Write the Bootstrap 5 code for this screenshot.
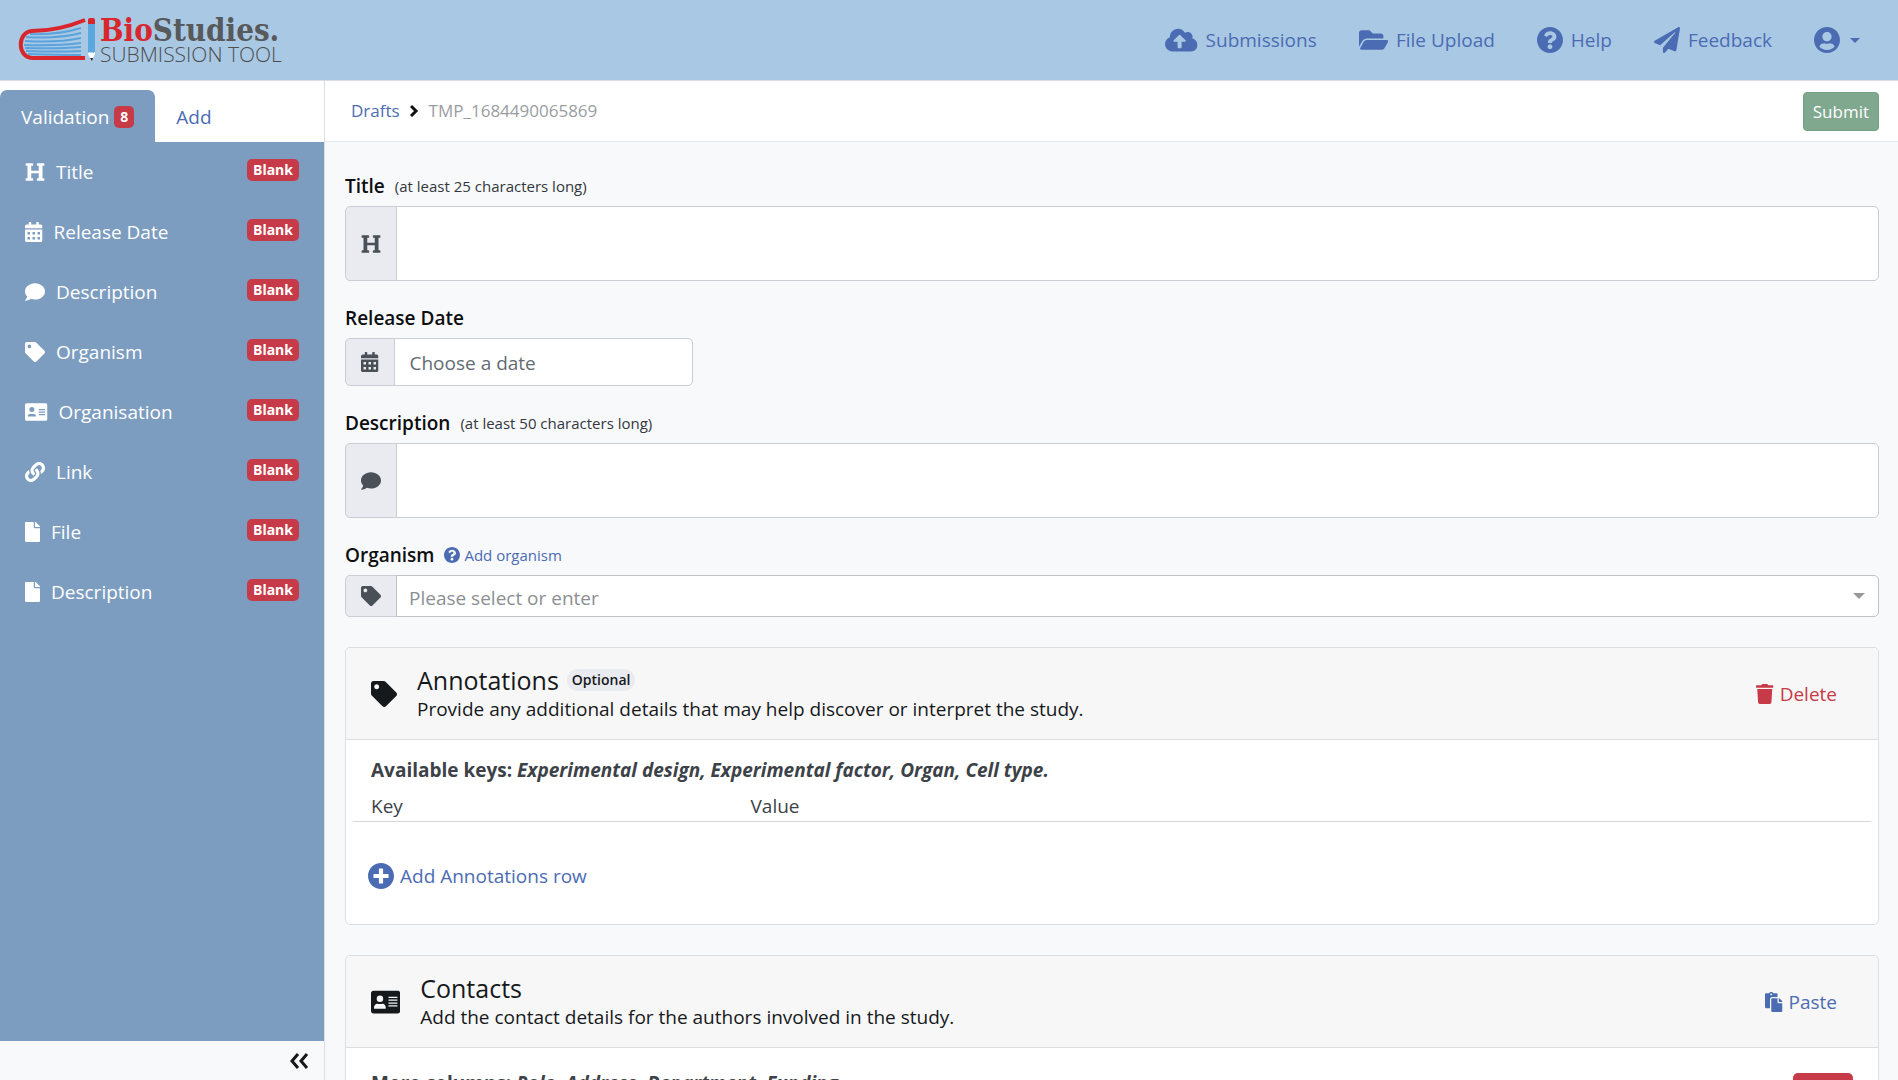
<!DOCTYPE html>
<html lang="en">
<head>
<meta charset="utf-8">
<meta name="viewport" content="width=device-width, initial-scale=1">
<title>BioStudies Submission Tool</title>
<link href="https://cdn.jsdelivr.net/npm/bootstrap@5.3.0/dist/css/bootstrap.min.css" rel="stylesheet">
<style>
:root { --brand: #4b6cb3; --danger: #c73a48; --side: #7c9dc0; --line: #dcdee2; }
body { font-family: "Open Sans", "Noto Sans", sans-serif; font-size: 19px; line-height: 30px; color: #16191c; background: #f8f9fb; }
a { color: var(--brand); text-decoration: none; }
.ico { height: 20px; width: auto; fill: currentColor; flex: none; }
.ico-sm { height: 16px; }
.ico-lg { height: 26px; }
.app { height: 100vh; overflow: hidden; }
.topbar { height: 81px; background: #a9c8e4; border-bottom: 1px solid #d9dde2; padding: 0 38px 0 18px; }
.topbar .navbar-nav { gap: 42px; }
.topbar .navbar-nav .nav-link { color: var(--brand); padding: 0; gap: 8px; }
.topbar .dropdown-toggle::after { margin-left: 2px; }
.brand-name { font: bold 31px/28px "DejaVu Serif Condensed", "DejaVu Serif", serif; color: #58595b; }
.brand-name b { color: #d8262c; }
.brand-sub { font-size: 21px; line-height: 20px; font-weight: 300; color: #4d4e50; }
.sidebar { width: 325px; border-right: 1px solid var(--line); }
.side-tabs { height: 61px; background: #fff; padding-top: 9px; }
.side-tabs .nav-link { border: 0; border-radius: 7px 7px 0 0; padding: 2px 21px 0; color: var(--brand); height: 52px; gap: 5px; }
.side-tabs .nav-link.active { background: var(--side); color: #fff; }
.tag-red { background: var(--danger); color: #fff; font-size: 14px; line-height: 14px; padding: 4px 6px; border-radius: 5px; font-weight: 700; }
.side-list { background: var(--side); }
.side-item { height: 60px; padding: 0 25px; color: #fff; gap: 11px; }
.side-item .tag-red { margin-bottom: 4px; }
.side-foot { height: 39px; padding: 0 15px; }
.crumbs { height: 61px; background: #fff; border-bottom: 1px solid #e6e8ec; padding: 0 19px 0 26px; font-size: 17px; }
.crumbs ol { gap: 10px; }
.crumbs .here { color: #9a9da1; }
.btn-send { --bs-btn-disabled-opacity: 1; font-size: 17px; line-height: 25px; padding: 6px 9px; border-radius: 4px; }
.btn-send:disabled { background: #7fa88f; border-color: #76a086; color: #fff; }
.form-area { padding: 29px 19px 0 20px; overflow: hidden; }
.field-row { margin-bottom: 22px; }
.field-row label { font-weight: 600; color: #0c0e10; line-height: 30px; }
.field-row .hint { font-size: 15px; color: #33383d; }
.field-row a.hint { color: var(--brand); }
.label-line { gap: 10px; margin-bottom: 5px; height: 30px; }
.input-group-text { background: #e9ebf0; border-color: #c9cdd4; color: #495057; border-radius: 5px; padding: 0 15px; }
.form-control, .form-select { font-size: 19px; line-height: 28px; border-color: #c9cdd4; border-radius: 5px; padding: 6px 12px; }
.form-control::placeholder { color: #636b73; }
.area-box { height: 75px; resize: none; }
.date-group { width: 348px; }
.date-group .form-control { height: 48px; padding: 8px 15px 6px; }
.pick { height: 42px; padding-top: 8px; color: #8b8f94; border-color: #bfc2c7; background-image: url("data:image/svg+xml,%3Csvg xmlns='http://www.w3.org/2000/svg' viewBox='0 0 12 6'%3E%3Cpath d='M0 0h12L6 6z' fill='%23999'/%3E%3C/svg%3E"); background-size: 12px 6px; background-position: right 13px center; }
.panel { border-color: var(--line); border-radius: 5px; margin-top: 30px; }
.panel .card-header { background: #f7f7f7; height: 92px; padding: 0 41px 0 25px; border-color: var(--line); gap: 20px; }
.panel h2 { font-size: 25px; line-height: 30px; font-weight: 500; margin: 0; }
.panel .card-header p { margin: 0; line-height: 28px; }
.pill-opt { background: #e9ebf0; color: #16191c; font-size: 14px; line-height: 14px; padding: 4px 5px; font-weight: 600; border-radius: 11px; }
.panel .btn { padding: 0; border: 0; font-size: 19px; line-height: 30px; gap: 6px; }
.panel .card-body { padding: 15px 7px 33px; }
.panel .columns-body { padding: 20px 18px 34px 7px; }
.keys-note { color: #3c4248; font-weight: 700; padding: 0 18px; margin-bottom: 7px; }
.key-table { margin: 0 0 39px; }
.key-table th { font-weight: 400; color: #3c4248; padding: 0 18px; line-height: 29px; border-color: #d3d6da; background: none; }
.btn-plain-blue { color: var(--brand); }
.btn-plain-red { color: var(--danger); }
.add-row { margin-left: 15px; }
.panel .btn-row-del { background: var(--danger); color: #fff; width: 60px; height: 28px; padding: 7px 4px; border-radius: 5px; margin: 5px 7px 0 0; }
</style>
</head>
<body>
<svg class="d-none" xmlns="http://www.w3.org/2000/svg">
  <symbol id="i-heading" viewBox="0 0 512 512"><path d="M448 96v320h32a16 16 0 0 1 16 16v32a16 16 0 0 1-16 16H320a16 16 0 0 1-16-16v-32a16 16 0 0 1 16-16h32V288H160v128h32a16 16 0 0 1 16 16v32a16 16 0 0 1-16 16H32a16 16 0 0 1-16-16v-32a16 16 0 0 1 16-16h32V96H32a16 16 0 0 1-16-16V48a16 16 0 0 1 16-16h160a16 16 0 0 1 16 16v32a16 16 0 0 1-16 16h-32v128h192V96h-32a16 16 0 0 1-16-16V48a16 16 0 0 1 16-16h160a16 16 0 0 1 16 16v32a16 16 0 0 1-16 16z"/></symbol>
  <symbol id="i-calendar" viewBox="0 0 448 512"><path fill-rule="evenodd" d="M0 464c0 26.500 21.500 48 48 48h352c26.500 0 48-21.500 48-48V192H0zM64 256h64v64H64zM192 256h64v64h-64zM320 256h64v64h-64zM64 384h64v64H64zM192 384h64v64h-64zM320 384h64v64h-64zM400 64h-48V16c0-8.800-7.200-16-16-16h-32c-8.800 0-16 7.200-16 16v48H160V16c0-8.800-7.200-16-16-16h-32c-8.800 0-16 7.200-16 16v48H48C21.500 64 0 85.500 0 112v48h448v-48c0-26.500-21.500-48-48-48z"/></symbol>
  <symbol id="i-comment" viewBox="0 0 512 512"><path d="M256 32C114.600 32 0 125.100 0 240c0 49.600 21.400 95 57 130.700C44.500 421.100 2.700 466 2.200 466.500c-2.200 2.300-2.800 5.700-1.500 8.700S4.800 480 8 480c66.300 0 116-31.800 140.600-51.400 32.700 12.300 69 19.400 107.400 19.400 141.400 0 256-93.100 256-208S397.400 32 256 32z"/></symbol>
  <symbol id="i-tag" viewBox="0 0 512 512"><path d="M0 252.118V48C0 21.490 21.490 0 48 0h204.118a48 48 0 0 1 33.941 14.059l211.882 211.882c18.745 18.745 18.745 49.137 0 67.882L293.823 497.941c-18.745 18.745-49.137 18.745-67.882 0L14.059 286.059A48 48 0 0 1 0 252.118zM112 64c-26.510 0-48 21.490-48 48s21.490 48 48 48 48-21.490 48-48-21.490-48-48-48z"/></symbol>
  <symbol id="i-card" viewBox="0 0 576 512"><path fill-rule="evenodd" d="M528 32H48C21.500 32 0 53.500 0 80v352c0 26.500 21.500 48 48 48h480c26.500 0 48-21.500 48-48V80c0-26.500-21.500-48-48-48zM176 128a64 64 0 1 1 0 128 64 64 0 0 1 0-128zM58 372c0-50 30-84 67-84 30 10 70 10 100 0 37 0 67 34 67 84 0 11-10 19-22 19H80c-12 0-22-8-22-19zM344 152h176v24H344zM344 208h176v24H344zM344 264h176v24H344zM344 320h176v24H344z"/></symbol>
  <symbol id="i-idcard" viewBox="0 0 576 512"><path fill-rule="evenodd" d="M528 32H48C21.500 32 0 53.500 0 80v352c0 26.500 21.500 48 48 48h480c26.500 0 48-21.500 48-48V80c0-26.500-21.500-48-48-48zM176 128a64 64 0 1 1 0 128 64 64 0 0 1 0-128zM72 358c0-30 24-54 54-54h100c30 0 54 24 54 54v10H72zM352 176h160v32H352zM352 240h160v32H352zM352 304h160v32H352z"/></symbol>
  <symbol id="i-link" viewBox="0 0 512 512"><path d="M326.612 185.391c59.747 59.809 58.927 155.698.36 214.590-.110.120-.240.250-.360.370l-67.200 67.200c-59.270 59.270-155.699 59.262-214.960 0-59.270-59.260-59.270-155.700 0-214.960l37.106-37.106c9.840-9.840 26.786-3.300 27.294 10.606.648 17.722 3.826 35.527 9.690 52.721 1.986 5.822.567 12.262-3.783 16.612l-13.087 13.087c-28.026 28.026-28.905 73.660-1.155 101.960 28.024 28.579 74.086 28.749 102.325.510l67.200-67.190c28.191-28.191 28.073-73.757 0-101.830-3.701-3.694-7.429-6.564-10.341-8.569a16.037 16.037 0 0 1-6.947-12.606c-.396-10.567 3.348-21.456 11.698-29.806l21.054-21.055c5.521-5.521 14.182-6.199 20.584-1.731a152.482 152.482 0 0 1 20.522 17.197zM467.547 44.449c-59.261-59.262-155.690-59.270-214.960 0l-67.200 67.200c-.120.120-.250.250-.360.370-58.566 58.892-59.387 154.781.360 214.590a152.454 152.454 0 0 0 20.521 17.196c6.402 4.468 15.064 3.789 20.584-1.731l21.054-21.055c8.350-8.350 12.094-19.239 11.698-29.806a16.037 16.037 0 0 0-6.947-12.606c-2.912-2.005-6.640-4.875-10.341-8.569-28.073-28.073-28.191-73.639 0-101.830l67.200-67.190c28.239-28.239 74.300-28.069 102.325.510 27.750 28.300 26.872 73.934-1.155 101.960l-13.087 13.087c-4.350 4.350-5.769 10.790-3.783 16.612 5.864 17.194 9.042 34.999 9.690 52.721.509 13.906 17.454 20.446 27.294 10.606l37.106-37.106c59.271-59.259 59.271-155.699.001-214.959z"/></symbol>
  <symbol id="i-file" viewBox="0 0 384 512"><path d="M224 136V0H24C10.700 0 0 10.700 0 24v464c0 13.300 10.700 24 24 24h336c13.300 0 24-10.700 24-24V160H248c-13.200 0-24-10.800-24-24zm160-14.100v6.100H256V0h6.100c6.400 0 12.500 2.500 17 7l97.900 98c4.500 4.500 7 10.600 7 16.900z"/></symbol>
  <symbol id="i-trash" viewBox="0 0 448 512"><path d="M432 32H312l-9.400-18.700A24 24 0 0 0 281.100 0H166.800a23.720 23.720 0 0 0-21.400 13.300L136 32H16A16 16 0 0 0 0 48v32a16 16 0 0 0 16 16h416a16 16 0 0 0 16-16V48a16 16 0 0 0-16-16zM53.200 467a48 48 0 0 0 47.900 45h245.800a48 48 0 0 0 47.900-45L416 128H32z"/></symbol>
  <symbol id="i-paste" viewBox="0 0 448 512"><path d="M128 184c0-30.879 25.122-56 56-56h136V56c0-13.255-10.745-24-24-24h-80.610C204.306 12.890 183.637 0 160 0s-44.306 12.890-55.390 32H24C10.745 32 0 42.745 0 56v336c0 13.255 10.745 24 24 24h104V184zm32-144c13.255 0 24 10.745 24 24s-10.745 24-24 24-24-10.745-24-24 10.745-24 24-24zm184 248h104v200c0 13.255-10.745 24-24 24H184c-13.255 0-24-10.745-24-24V184c0-13.255 10.745-24 24-24h136v104c0 13.200 10.800 24 24 24zm104-38.059V256h-96v-96h6.059a24 24 0 0 1 16.970 7.029l65.941 65.941a24.002 24.002 0 0 1 7.030 16.971z"/></symbol>
  <symbol id="i-plus" viewBox="8 8 496 496"><path d="M256 8C119 8 8 119 8 256s111 248 248 248 248-111 248-248S393 8 256 8zm144 276c0 6.600-5.400 12-12 12h-92v92c0 6.600-5.400 12-12 12h-56c-6.600 0-12-5.400-12-12v-92h-92c-6.600 0-12-5.400-12-12v-56c0-6.600 5.400-12 12-12h92v-92c0-6.600 5.400-12 12-12h56c6.600 0 12 5.400 12 12v92h92c6.600 0 12 5.400 12 12v56z"/></symbol>
  <symbol id="i-help" viewBox="8 8 496 496"><path d="M504 256c0 136.997-111.043 248-248 248S8 392.997 8 256C8 119.083 119.043 8 256 8s248 111.083 248 248zM262.655 90c-54.497 0-89.255 22.957-116.549 63.758-3.536 5.286-2.353 12.415 2.715 16.258l34.699 26.310c5.205 3.947 12.621 3.008 16.665-2.122 17.864-22.658 30.113-35.797 57.303-35.797 20.429 0 45.698 13.148 45.698 32.958 0 14.976-12.363 22.667-32.534 33.976C247.128 238.528 216 254.941 216 296v4c0 6.627 5.373 12 12 12h56c6.627 0 12-5.373 12-12v-1.333c0-28.462 83.186-29.647 83.186-106.667 0-58.002-60.165-102-116.531-102zM256 338c-25.365 0-46 20.635-46 46 0 25.364 20.635 46 46 46s46-20.636 46-46c0-25.365-20.635-46-46-46z"/></symbol>
  <symbol id="i-cloud" viewBox="0 0 640 512"><path d="M537.600 226.600c4.100-10.700 6.400-22.400 6.400-34.600 0-53-43-96-96-96-19.700 0-38.100 6-53.300 16.200C367 64.200 315.300 32 256 32c-88.400 0-160 71.600-160 160 0 2.700.1 5.400.2 8.100C40.200 219.800 0 273.200 0 336c0 79.500 64.500 144 144 144h368c70.700 0 128-57.300 128-128 0-61.900-44-113.600-102.400-125.400zM393.400 288H328v112c0 8.800-7.200 16-16 16h-48c-8.800 0-16-7.200-16-16V288h-65.400c-14.300 0-21.400-17.200-11.300-27.300l105.400-105.400c6.200-6.200 16.400-6.200 22.600 0l105.400 105.400c10.100 10.100 2.900 27.300-11.300 27.300z"/></symbol>
  <symbol id="i-folder" viewBox="0 0 576 512"><path d="M572.694 292.093L500.270 416.248A63.997 63.997 0 0 1 444.989 448H45.025c-18.523 0-30.064-20.093-20.731-36.093l72.424-124.155A64 64 0 0 1 152 256h399.964c18.523 0 30.064 20.093 20.730 36.093zM152 224h328v-48c0-26.510-21.490-48-48-48H272l-64-64H48C21.490 64 0 85.490 0 112v278.046l69.077-118.418C86.214 242.250 117.989 224 152 224z"/></symbol>
  <symbol id="i-plane" viewBox="0 0 512 512"><path d="M476 3.200L12.500 270.600c-18.100 10.400-15.800 35.600 2.200 43.200L121 358.400l287.300-253.200c5.500-4.900 13.300 2.600 8.600 8.300L176 407v80.500c0 23.600 28.500 32.900 42.500 15.800L282 426l124.600 52.200c14.200 6 30.400-2.900 33-18.200l72-432C515 7.800 493.300-6.800 476 3.200z"/></symbol>
  <symbol id="i-user" viewBox="0 8 496 496"><path d="M248 8C111 8 0 119 0 256s111 248 248 248 248-111 248-248S385 8 248 8zm0 96c48.600 0 88 39.400 88 88s-39.400 88-88 88-88-39.400-88-88 39.400-88 88-88zm0 344c-58.700 0-111.300-26.600-146.500-68.200 18.800-35.400 55.600-59.800 98.500-59.800 2.400 0 4.800.4 7.100 1.100 13 4.200 26.600 6.900 40.900 6.900 14.300 0 28-2.700 40.900-6.900 2.300-.7 4.700-1.100 7.100-1.100 42.900 0 79.700 24.400 98.500 59.800C359.300 421.400 306.700 448 248 448z"/></symbol>
</svg>

<div class="app d-flex flex-column">
  <header class="topbar navbar navbar-expand flex-nowrap justify-content-between flex-shrink-0">
    <a href="#" class="d-flex align-items-center gap-1 flex-shrink-0" aria-label="BioStudies Submission Tool">
      <svg width="78" height="46" viewBox="0 0 78 46">
        <g fill="none" stroke="#5aa3dc" stroke-width="2">
          <path d="M12 17Q40 18 63 11M8 20Q40 22 63 16M7 24Q40 26 63 21M6 28Q40 29 63 26M7 31Q40 32 63 30M8 34Q40 35 63 34M10 37Q40 38 63 38"/>
        </g>
        <path d="M67 3Q40 14 14 14C-1 15-1 40 14 41H67" fill="none" stroke="#d8262c" stroke-width="4"/>
        <path d="M70 7h7v30h-7z" fill="#5ba7df"/>
        <path d="M70 7V3q0-2 2-2h3q2 0 2 2v4z" fill="#d8262c"/>
        <path d="M70 36l2-1 1 1 1-1 1 1 2-1v2l-3 6h-1l-3-6z" fill="#fff"/>
        <path d="M72 41h3l-1 3z" fill="#222"/>
      </svg>
      <span class="d-flex flex-column text-nowrap">
        <span class="brand-name"><b>Bio</b>Studies.</span>
        <span class="brand-sub">SUBMISSION TOOL</span>
      </span>
    </a>
    <nav>
      <ul class="navbar-nav align-items-center text-nowrap">
        <li><a class="nav-link d-flex align-items-center" href="#"><svg class="ico ico-lg" viewBox="0 0 640 512"><use href="#i-cloud"/></svg>Submissions</a></li>
        <li><a class="nav-link d-flex align-items-center" href="#"><svg class="ico ico-lg" viewBox="0 0 576 512"><use href="#i-folder"/></svg>File Upload</a></li>
        <li><a class="nav-link d-flex align-items-center" href="#"><svg class="ico ico-lg" viewBox="0 0 512 512"><use href="#i-help"/></svg>Help</a></li>
        <li><a class="nav-link d-flex align-items-center" href="#"><svg class="ico ico-lg" viewBox="0 0 512 512"><use href="#i-plane"/></svg>Feedback</a></li>
        <li><a class="nav-link d-flex align-items-center dropdown-toggle" href="#" role="button" aria-label="Account"><svg class="ico ico-lg" viewBox="0 0 512 512"><use href="#i-user"/></svg></a></li>
      </ul>
    </nav>
  </header>

  <div class="d-flex flex-grow-1 overflow-hidden">
    <aside class="sidebar d-flex flex-column flex-shrink-0">
      <div class="side-tabs nav flex-nowrap">
        <a class="nav-link active d-flex align-items-center" href="#">Validation <span class="tag-red">8</span></a>
        <a class="nav-link d-flex align-items-center" href="#">Add</a>
      </div>
      <nav class="side-list flex-grow-1">
        <a class="side-item d-flex align-items-center" href="#"><svg class="ico" viewBox="0 0 512 512"><use href="#i-heading"/></svg><span class="me-auto">Title</span><span class="tag-red">Blank</span></a>
        <a class="side-item d-flex align-items-center" href="#"><svg class="ico" viewBox="0 0 448 512"><use href="#i-calendar"/></svg><span class="me-auto">Release Date</span><span class="tag-red">Blank</span></a>
        <a class="side-item d-flex align-items-center" href="#"><svg class="ico" viewBox="0 0 512 512"><use href="#i-comment"/></svg><span class="me-auto">Description</span><span class="tag-red">Blank</span></a>
        <a class="side-item d-flex align-items-center" href="#"><svg class="ico" viewBox="0 0 512 512"><use href="#i-tag"/></svg><span class="me-auto">Organism</span><span class="tag-red">Blank</span></a>
        <a class="side-item d-flex align-items-center" href="#"><svg class="ico" viewBox="0 0 576 512"><use href="#i-idcard"/></svg><span class="me-auto">Organisation</span><span class="tag-red">Blank</span></a>
        <a class="side-item d-flex align-items-center" href="#"><svg class="ico" viewBox="0 0 512 512"><use href="#i-link"/></svg><span class="me-auto">Link</span><span class="tag-red">Blank</span></a>
        <a class="side-item d-flex align-items-center" href="#"><svg class="ico" viewBox="0 0 384 512"><use href="#i-file"/></svg><span class="me-auto">File</span><span class="tag-red">Blank</span></a>
        <a class="side-item d-flex align-items-center" href="#"><svg class="ico" viewBox="0 0 384 512"><use href="#i-file"/></svg><span class="me-auto">Description</span><span class="tag-red">Blank</span></a>
      </nav>
      <div class="side-foot d-flex align-items-center justify-content-end">
        <button type="button" class="btn p-0 border-0 d-flex" aria-label="Collapse sidebar"><svg width="20" height="16" viewBox="0 0 20 16" fill="none" stroke="#16191c" stroke-width="3"><path d="M9 1L3 8l6 7M18 1l-6 7 6 7"/></svg></button>
      </div>
    </aside>

    <main class="d-flex flex-column flex-grow-1 overflow-hidden">
      <div class="crumbs d-flex align-items-center justify-content-between flex-shrink-0">
        <ol class="list-unstyled d-flex align-items-center m-0">
          <li><a href="#">Drafts</a></li>
          <li class="d-flex" aria-hidden="true"><svg width="9" height="12" viewBox="0 0 9 12" fill="none" stroke="#111" stroke-width="3"><path d="M1 1l5 5-5 5"/></svg></li>
          <li class="here">TMP_1684490065869</li>
        </ol>
        <button type="submit" class="btn btn-send" disabled>Submit</button>
      </div>

      <form class="form-area flex-grow-1">
        <div class="field-row">
          <div class="label-line d-flex align-items-center"><label for="f-title">Title</label><span class="hint">(at least 25 characters long)</span></div>
          <div class="input-group"><span class="input-group-text"><svg class="ico" viewBox="0 0 512 512"><use href="#i-heading"/></svg></span><textarea id="f-title" class="form-control area-box"></textarea></div>
        </div>
        <div class="field-row">
          <div class="label-line d-flex align-items-center"><label for="f-date">Release Date</label></div>
          <div class="input-group date-group"><span class="input-group-text"><svg class="ico" viewBox="0 0 448 512"><use href="#i-calendar"/></svg></span><input id="f-date" type="text" class="form-control" placeholder="Choose a date"></div>
        </div>
        <div class="field-row">
          <div class="label-line d-flex align-items-center"><label for="f-desc">Description</label><span class="hint">(at least 50 characters long)</span></div>
          <div class="input-group"><span class="input-group-text"><svg class="ico" viewBox="0 0 512 512"><use href="#i-comment"/></svg></span><textarea id="f-desc" class="form-control area-box"></textarea></div>
        </div>
        <div class="field-row">
          <div class="label-line d-flex align-items-center"><label for="f-org">Organism</label><a href="#" class="hint d-flex align-items-center gap-1"><svg class="ico ico-sm" viewBox="0 0 512 512"><use href="#i-help"/></svg>Add organism</a></div>
          <div class="input-group"><span class="input-group-text"><svg class="ico" viewBox="0 0 512 512"><use href="#i-tag"/></svg></span><select id="f-org" class="form-select pick"><option>Please select or enter</option></select></div>
        </div>

        <section class="card panel">
          <div class="card-header d-flex align-items-center">
            <svg class="ico ico-lg" viewBox="0 0 512 512"><use href="#i-tag"/></svg>
            <div class="me-auto">
              <div class="d-flex align-items-center gap-2"><h2>Annotations</h2><span class="pill-opt">Optional</span></div>
              <p>Provide any additional details that may help discover or interpret the study.</p>
            </div>
            <button type="button" class="btn btn-plain-red d-flex align-items-center"><svg class="ico" viewBox="0 0 448 512"><use href="#i-trash"/></svg>Delete</button>
          </div>
          <div class="card-body">
            <p class="keys-note">Available keys: <em>Experimental design, Experimental factor, Organ, Cell type.</em></p>
            <table class="table key-table">
              <thead><tr><th class="w-25" scope="col">Key</th><th scope="col">Value</th></tr></thead>
            </table>
            <button type="button" class="btn btn-plain-blue add-row d-flex align-items-center"><svg class="ico ico-lg" viewBox="0 0 512 512"><use href="#i-plus"/></svg>Add Annotations row</button>
          </div>
        </section>

        <section class="card panel">
          <div class="card-header d-flex align-items-center">
            <svg class="ico ico-lg" viewBox="0 0 576 512"><use href="#i-card"/></svg>
            <div class="me-auto">
              <h2>Contacts</h2>
              <p>Add the contact details for the authors involved in the study.</p>
            </div>
            <button type="button" class="btn btn-plain-blue d-flex align-items-center"><svg class="ico" viewBox="0 0 448 512"><use href="#i-paste"/></svg>Paste</button>
          </div>
          <div class="card-body columns-body d-flex justify-content-between align-items-start">
            <p class="keys-note">More columns: <em>Role, Address, Department, Funding.</em></p>
            <button type="button" class="btn btn-row-del d-flex" aria-label="Remove column"><svg class="ico ico-sm" viewBox="0 0 448 512"><use href="#i-trash"/></svg></button>
          </div>
        </section>
      </form>
    </main>
  </div>
</div>
<script src="https://cdn.jsdelivr.net/npm/bootstrap@5.3.0/dist/js/bootstrap.bundle.min.js"></script>
</body>
</html>
